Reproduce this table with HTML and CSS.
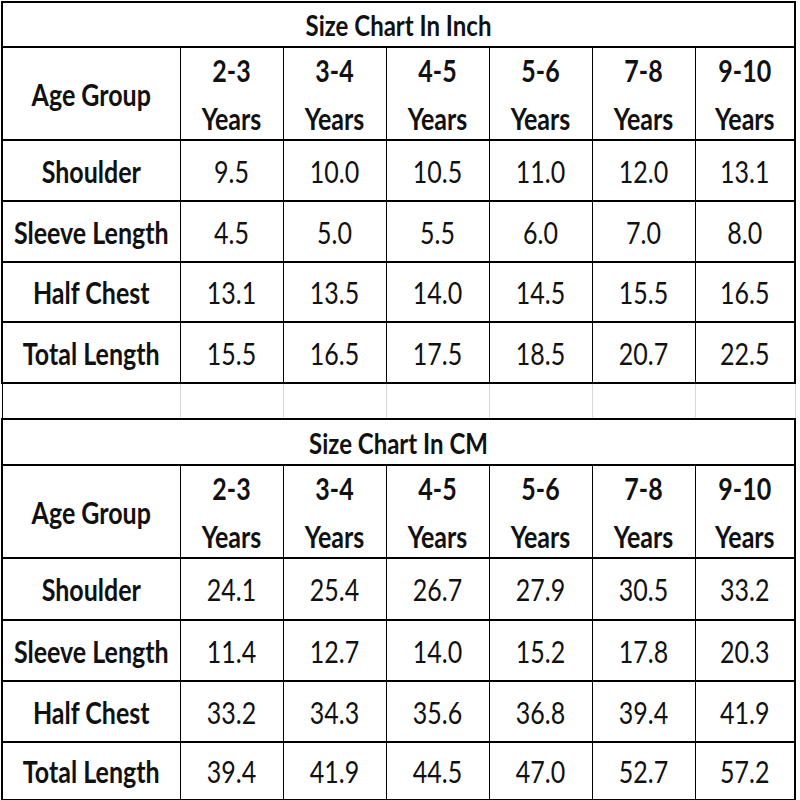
FILE: index.html
```html
<!DOCTYPE html>
<html>
<head>
<meta charset="utf-8">
<title>Size Chart</title>
<link rel="stylesheet" href="styles.css">
</head>
<body>
<div class="page">
<table class="chart">
  <colgroup>
    <col class="c-label"><col class="c-val"><col class="c-val"><col class="c-val"><col class="c-val"><col class="c-val"><col class="c-last">
  </colgroup>
  <tr class="r-title"><th colspan="7"><span class="t">Size Chart In Inch</span></th></tr>
  <tr class="r-head">
    <th><span class="t">Age Group</span></th>
    <th><span class="t">2-3<br>Years</span></th>
    <th><span class="t">3-4<br>Years</span></th>
    <th><span class="t">4-5<br>Years</span></th>
    <th><span class="t">5-6<br>Years</span></th>
    <th><span class="t">7-8<br>Years</span></th>
    <th><span class="t">9-10<br>Years</span></th>
  </tr>
  <tr class="r-data"><th><span class="t">Shoulder</span></th><td><span class="t">9.5</span></td><td><span class="t">10.0</span></td><td><span class="t">10.5</span></td><td><span class="t">11.0</span></td><td><span class="t">12.0</span></td><td><span class="t">13.1</span></td></tr>
  <tr class="r-data"><th><span class="t">Sleeve Length</span></th><td><span class="t">4.5</span></td><td><span class="t">5.0</span></td><td><span class="t">5.5</span></td><td><span class="t">6.0</span></td><td><span class="t">7.0</span></td><td><span class="t">8.0</span></td></tr>
  <tr class="r-data r-mid"><th><span class="t">Half Chest</span></th><td><span class="t">13.1</span></td><td><span class="t">13.5</span></td><td><span class="t">14.0</span></td><td><span class="t">14.5</span></td><td><span class="t">15.5</span></td><td><span class="t">16.5</span></td></tr>
  <tr class="r-data"><th><span class="t">Total Length</span></th><td><span class="t">15.5</span></td><td><span class="t">16.5</span></td><td><span class="t">17.5</span></td><td><span class="t">18.5</span></td><td><span class="t">20.7</span></td><td><span class="t">22.5</span></td></tr>
  <tr class="r-gap"><td></td><td></td><td></td><td></td><td></td><td></td><td></td></tr>
  <tr class="r-title r-title2"><th colspan="7"><span class="t">Size Chart In CM</span></th></tr>
  <tr class="r-head">
    <th><span class="t">Age Group</span></th>
    <th><span class="t">2-3<br>Years</span></th>
    <th><span class="t">3-4<br>Years</span></th>
    <th><span class="t">4-5<br>Years</span></th>
    <th><span class="t">5-6<br>Years</span></th>
    <th><span class="t">7-8<br>Years</span></th>
    <th><span class="t">9-10<br>Years</span></th>
  </tr>
  <tr class="r-data r-d2"><th><span class="t">Shoulder</span></th><td><span class="t">24.1</span></td><td><span class="t">25.4</span></td><td><span class="t">26.7</span></td><td><span class="t">27.9</span></td><td><span class="t">30.5</span></td><td><span class="t">33.2</span></td></tr>
  <tr class="r-data"><th><span class="t">Sleeve Length</span></th><td><span class="t">11.4</span></td><td><span class="t">12.7</span></td><td><span class="t">14.0</span></td><td><span class="t">15.2</span></td><td><span class="t">17.8</span></td><td><span class="t">20.3</span></td></tr>
  <tr class="r-data"><th><span class="t">Half Chest</span></th><td><span class="t">33.2</span></td><td><span class="t">34.3</span></td><td><span class="t">35.6</span></td><td><span class="t">36.8</span></td><td><span class="t">39.4</span></td><td><span class="t">41.9</span></td></tr>
  <tr class="r-data r-last"><th><span class="t">Total Length</span></th><td><span class="t">39.4</span></td><td><span class="t">41.9</span></td><td><span class="t">44.5</span></td><td><span class="t">47.0</span></td><td><span class="t">52.7</span></td><td><span class="t">57.2</span></td></tr>
</table>
</div>
</body>
</html>
```

FILE: styles.css
```css
html, body {
  margin: 0;
  padding: 0;
  background: #fff;
}

.page {
  width: 800px;
  height: 800px;
  padding-top: 1px;
  padding-left: 1px;
  box-sizing: border-box;
  overflow: hidden;
}

.chart {
  border-collapse: collapse;
  table-layout: fixed;
  width: 794px;
  font-family: Lato, "Open Sans", "Liberation Sans", sans-serif;
  font-size: 25px;
  color: #111;
}

.c-label { width: 178px; }
.c-val { width: 103px; }
.c-last { width: 100px; }

.chart th,
.chart td {
  padding: 0;
  text-align: center;
  vertical-align: middle;
  border-top: 2px solid #000;
  border-bottom: 2px solid #000;
  border-left: 1px solid #000;
  border-right: 1px solid #000;
  line-height: 28px;
}

.chart th { font-weight: 700; }
.chart td { font-weight: 400; }

.chart tr > :first-child { border-left-width: 2px; }
.chart tr > :last-child { border-right-width: 2px; }

.t {
  display: inline-block;
  transform: scaleY(1.2);
  white-space: nowrap;
}

.r-title { height: 45px; }
.r-title .t { font-size: 24px; }
.r-head { height: 93px; }
.r-head .t { line-height: 40px; }
.r-data { height: 61px; }
.r-mid { height: 60px; }
.r-title2 { height: 46px; }
.r-d2 { height: 62px; }
.r-last { height: 58px; }

.r-gap { height: 36px; }
.chart .r-gap td {
  border-top: none;
  border-bottom: none;
  border-left: 1px solid #d9d9d9;
  border-right: 1px solid #d9d9d9;
}
.chart .r-gap td:first-child { border-left: 1px solid #000; }
```
